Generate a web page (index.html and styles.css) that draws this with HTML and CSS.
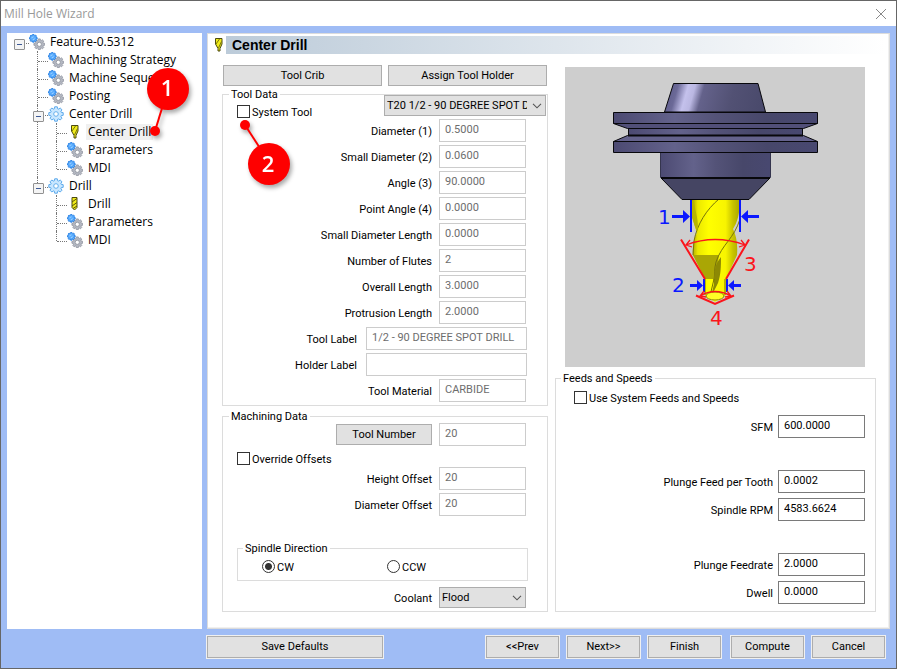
FILE: index.html
```html
<!DOCTYPE html>
<html lang="en">
<head>
<meta charset="utf-8">
<meta name="viewport" content="width=device-width, initial-scale=1">
<title>Mill Hole Wizard</title>
<link rel="stylesheet" href="styles.css">
</head>
<body>
<svg class="sprite" aria-hidden="true">
  <defs>
    <linearGradient id="steel" x1="0" x2="1" y1="0" y2="0">
      <stop offset="0" stop-color="#4c4a72"/><stop offset=".3" stop-color="#63628b"/><stop offset=".5" stop-color="#545378"/><stop offset=".75" stop-color="#47476a"/><stop offset="1" stop-color="#484870"/>
    </linearGradient>
    <linearGradient id="cone" x1="0" x2="1" y1="0" y2=".08">
      <stop offset="0" stop-color="#565482"/><stop offset=".14" stop-color="#6c6a98"/><stop offset=".24" stop-color="#c4c1ec"/><stop offset=".31" stop-color="#bab7e2"/><stop offset=".4" stop-color="#64628b"/><stop offset=".7" stop-color="#525174"/><stop offset="1" stop-color="#4a4a6c"/>
    </linearGradient>
    <linearGradient id="brass" x1="0" x2="1" y1="0" y2="0">
      <stop offset="0" stop-color="#a8a400"/><stop offset=".12" stop-color="#ece800"/><stop offset=".35" stop-color="#ffff00"/><stop offset=".7" stop-color="#f8f400"/><stop offset=".85" stop-color="#c8c400"/><stop offset="1" stop-color="#aaa600"/>
    </linearGradient>
    <path id="cog" d="M5.200-1.700 7.200-1.300 7.200 1.300 5.200 1.700 4.900 2.500 6 4.200 4.200 6 2.500 4.900 1.700 5.200 1.300 7.200-1.300 7.200-1.700 5.200-2.500 4.900-4.200 6-6 4.200-4.900 2.500-5.200 1.700-7.200 1.300-7.200-1.300-5.200-1.700-4.900-2.500-6-4.200-4.200-6-2.500-4.900-1.700-5.200-1.300-7.200 1.300-7.200 1.700-5.200 2.500-4.900 4.200-6 6-4.200 4.900-2.500z" stroke-linejoin="round"/>
    <symbol id="gears" viewBox="0 0 16 16">
      <use href="#cog" transform="translate(10.300 10.300) scale(.75)" fill="#b4b8c2" stroke="#8d929e" stroke-width="1"/>
      <circle cx="10.300" cy="10.300" r="2.100" fill="#fff" stroke="#8b909b" stroke-width=".8"/>
      <use href="#cog" transform="translate(4.300 4.300) scale(.54)" fill="#5aadff" stroke="#1d78e0" stroke-width="1.500"/>
      <path d="M2.500 3.800 4.500 2.800M3.800 5.800 5.800 4.800" stroke="#a5d5ff" stroke-width=".9"/>
    </symbol>
    <symbol id="gear" viewBox="0 0 16 16">
      <use href="#cog" transform="translate(8 8)" fill="#c9e7ff" stroke="#4fa3ea" stroke-width=".9"/>
      <circle cx="8" cy="8" r="2.300" fill="#fff" stroke="#57a8ea" stroke-width=".9"/>
    </symbol>
    <symbol id="spot" viewBox="0 0 16 16">
      <path d="M4.500 1.500h6.500v5.500L9 11.500v2.500H7v-2.500L4.500 7z" fill="#f1ec1a" stroke="#4c4b10" stroke-width="1"/>
      <path d="M8.500 2 5 7M10.500 4.500 7.500 11" stroke="#77750c" stroke-width="1"/>
    </symbol>
    <symbol id="drill" viewBox="0 0 16 16">
      <path d="M5 1.500h5v10l-2.500 2.500L5 11.500z" fill="#f1ec1a" stroke="#4c4b10" stroke-width="1"/>
      <path d="M10 2.500 5 6M10 6.500 5 10M10 10 6 12.500" stroke="#57550c" stroke-width="1"/>
    </symbol>
    <symbol id="chevron" viewBox="0 0 10 6"><path d="M1 .8 5 4.800 9 .8" fill="none" stroke="#555" stroke-width="1.100"/></symbol>
  </defs>
</svg>
<div class="window">
  <header class="titlebar">
    <span>Mill Hole Wizard</span>
    <button class="close" type="button" aria-label="Close"><svg viewBox="0 0 12 12"><path d="M1 1 11 11M11 1 1 11" stroke="#888" stroke-width="1"/></svg></button>
  </header>

  <div class="body">
    <nav class="tree" aria-label="Feature steps">
      <ul class="root">
        <li><div class="node open"><svg><use href="#gears"/></svg><span>Feature-0.5312</span></div>
          <ul>
            <li><div class="node"><svg><use href="#gears"/></svg><span>Machining Strategy</span></div></li>
            <li><div class="node"><svg><use href="#gears"/></svg><span>Machine Sequence</span></div></li>
            <li><div class="node"><svg><use href="#gears"/></svg><span>Posting</span></div></li>
            <li><div class="node open"><svg><use href="#gear"/></svg><span>Center Drill</span></div>
              <ul>
                <li><div class="node selected"><svg><use href="#spot"/></svg><span>Center Drill</span>
                  <svg class="callout callout-one" viewBox="0 0 60 80"><path d="M16 63 28 24" stroke="#fe0000" stroke-width="2"/><circle cx="16" cy="63" r="5" fill="#fe0000"/><circle cx="29" cy="21" r="21" fill="#fe0000"/><text x="28" y="28">1</text></svg></div></li>
                <li><div class="node"><svg><use href="#gears"/></svg><span>Parameters</span></div></li>
                <li><div class="node"><svg><use href="#gears"/></svg><span>MDI</span></div></li>
              </ul>
            </li>
            <li><div class="node open"><svg><use href="#gear"/></svg><span>Drill</span></div>
              <ul>
                <li><div class="node"><svg><use href="#drill"/></svg><span>Drill</span></div></li>
                <li><div class="node"><svg><use href="#gears"/></svg><span>Parameters</span></div></li>
                <li><div class="node"><svg><use href="#gears"/></svg><span>MDI</span></div></li>
              </ul>
            </li>
          </ul>
        </li>
      </ul>
    </nav>

    <main class="page">
      <div class="page-head"><svg><use href="#spot"/></svg><h1>Center Drill</h1></div>
      <div class="columns">
        <div class="column">
          <div class="tool-buttons">
            <button type="button">Tool Crib</button>
            <button type="button">Assign Tool Holder</button>
          </div>

          <fieldset class="tool-data">
            <legend>Tool Data</legend>
            <div class="tool-pick">
              <label class="check"><input type="checkbox">System Tool
                <svg class="callout callout-two" viewBox="0 0 70 80"><path d="M12 8 34 42" stroke="#fe0000" stroke-width="2"/><circle cx="12" cy="8" r="5" fill="#fe0000"/><circle cx="36" cy="47" r="21" fill="#fe0000"/><text x="35" y="55">2</text></svg></label>
              <div class="select"><select aria-label="Tool"><option>T20 1/2 - 90 DEGREE SPOT DRILL</option></select><svg><use href="#chevron"/></svg></div>
            </div>
            <div class="rows">
              <div class="row"><label for="dia">Diameter (1)</label><input id="dia" value="0.5000" disabled></div>
              <div class="row"><label for="sdia">Small Diameter (2)</label><input id="sdia" value="0.0600" disabled></div>
              <div class="row"><label for="ang">Angle (3)</label><input id="ang" value="90.0000" disabled></div>
              <div class="row"><label for="pang">Point Angle (4)</label><input id="pang" value="0.0000" disabled></div>
              <div class="row"><label for="sdl">Small Diameter Length</label><input id="sdl" value="0.0000" disabled></div>
              <div class="row"><label for="flutes">Number of Flutes</label><input id="flutes" value="2" disabled></div>
              <div class="row"><label for="olen">Overall Length</label><input id="olen" value="3.0000" disabled></div>
              <div class="row"><label for="plen">Protrusion Length</label><input id="plen" value="2.0000" disabled></div>
              <div class="row wide"><label for="tlabel">Tool Label</label><input id="tlabel" value="1/2 - 90 DEGREE SPOT DRILL" disabled></div>
              <div class="row wide"><label for="hlabel">Holder Label</label><input id="hlabel" value="" disabled></div>
              <div class="row"><label for="mat">Tool Material</label><input id="mat" value="CARBIDE" disabled></div>
            </div>
          </fieldset>

          <fieldset class="machining">
            <legend>Machining Data</legend>
            <div class="rows">
              <div class="row"><button type="button">Tool Number</button><input value="20" aria-label="Tool Number" disabled></div>
              <label class="check"><input type="checkbox">Override Offsets</label>
              <div class="row"><label for="hoff">Height Offset</label><input id="hoff" value="20" disabled></div>
              <div class="row"><label for="doff">Diameter Offset</label><input id="doff" value="20" disabled></div>
            </div>
            <fieldset class="spindle">
              <legend>Spindle Direction</legend>
              <label class="check"><input type="radio" name="dir" checked>CW</label>
              <label class="check"><input type="radio" name="dir">CCW</label>
            </fieldset>
            <div class="rows">
              <div class="row"><label for="cool">Coolant</label><div class="select"><select id="cool"><option>Flood</option></select><svg><use href="#chevron"/></svg></div></div>
            </div>
          </fieldset>
        </div>

        <div class="column">
          <svg class="drawing" viewBox="0 0 300 300" role="img" aria-label="Tool dimensions">
            <rect width="300" height="300" fill="#cecece"/>
            <path d="M127 132H175C175 147 172 156 168 162C171 168 173 177 172 188L161 212V228L150 235 140 228V212L128 188C127 180 129 172 132 165C128 156 127 148 127 132z" fill="url(#brass)"/>
            <path d="M128 188H154L150 212H140z" fill="#aaa605"/>
            <path d="M154 132C142 142 132 157 129 174L128 188M175 152C169 172 157 177 151 195C149 202 150 208 149 213" fill="none" stroke="#77740a"/>
            <path d="M156 190C150 197 149 204 149 217L146 230 153 216C156 207 156 199 156 190z" fill="#8d8904"/>
            <path d="M127 134V151L132 165C135 156 130 145 129 134z" fill="#b8b400"/>
            <path d="M140 212V228M160 212V228M149 212 145 229" stroke="#777400" fill="none"/>
            <ellipse cx="150" cy="229" rx="9" ry="4" fill="#ffff25" stroke="#8c8706"/>
            <g stroke="#08080c">
              <path d="M108.500 16.500H193L200.500 45H99.500z" fill="url(#cone)"/>
              <path d="M48.500 56.500 62.500 61.500H238.500L252.500 56.500z" fill="#514f78"/>
              <path d="M48.500 45.500h204v11h-204z" fill="url(#steel)"/>
              <path d="M63.500 61.500h174v7h-174z" fill="url(#steel)"/>
              <path d="M62.500 68.500 48.500 74.500H252.500L238.500 68.500z" fill="#64628c"/>
              <path d="M63 68.500H238" stroke-width="2"/>
              <path d="M95.500 85.500h110v25h-110z" fill="url(#steel)" stroke="#35354e"/>
              <path d="M48.500 74.500h204v11h-204z" fill="url(#steel)"/>
              <path d="M96 111 117 132.500H184L205 111z" fill="#454563"/>
              <path d="M96 111H205" stroke-width="2"/>
            </g>
            <g stroke="#0b18ff" stroke-width="2" fill="none">
              <path d="M126 133V165M175 133V165M139 212V225M162 212V225"/>
              <path d="M107 149.500H119M194 149.500H182M125 218.500H133M176 218.500H168" stroke-width="3"/>
            </g>
            <path d="M118 143 125 149.500 118 156zM183 143 176 149.500 183 156zM132 213 138 218.500 132 224zM169 213 163 218.500 169 224z" fill="#0b18ff"/>
            <g stroke="#fb151b" fill="none">
              <path d="M116 172.500 140 212M184 172.500 161 212M131 228.500 150 237 169 228.500" stroke-width="2"/>
              <path d="M121 178Q150 167 180 178M135 229Q150 220 166 229M125 173 121 178 127 180M176 173 180 178 174 180M139 224 135 229 141 230M162 224 166 229 160 230" stroke-width="1.300"/>
            </g>
            <g class="dims">
              <text class="blue" x="93" y="157">1</text><text class="blue" x="107" y="225">2</text>
              <text class="red" x="179" y="204">3</text><text class="red" x="145" y="258">4</text>
            </g>
          </svg>

          <fieldset class="feeds">
            <legend>Feeds and Speeds</legend>
            <label class="check"><input type="checkbox">Use System Feeds and Speeds</label>
            <div class="row"><label for="sfm">SFM</label><input id="sfm" value="600.0000"></div>
            <div class="row apart"><label for="pft">Plunge Feed per Tooth</label><input id="pft" value="0.0002"></div>
            <div class="row"><label for="rpm">Spindle RPM</label><input id="rpm" value="4583.6624"></div>
            <div class="row apart"><label for="pfr">Plunge Feedrate</label><input id="pfr" value="2.0000"></div>
            <div class="row"><label for="dwell">Dwell</label><input id="dwell" value="0.0000"></div>
          </fieldset>
        </div>
      </div>
    </main>
  </div>

  <footer class="actions">
    <button class="save" type="button">Save Defaults</button>
    <div class="group">
      <button type="button">&lt;&lt;Prev</button>
      <button type="button">Next&gt;&gt;</button>
      <button type="button">Finish</button>
    </div>
    <div class="group">
      <button type="button">Compute</button>
      <button type="button">Cancel</button>
    </div>
  </footer>
</div>
</body>
</html>
```
FILE: styles.css
```css
* { box-sizing: border-box; }
body { margin: 0; font: 11px/14px Roboto, "Noto Sans", sans-serif; color: #000; background: #9fbcf5; }
.sprite { position: absolute; width: 0; height: 0; }
.window { min-height: 100vh; display: flex; flex-direction: column; border: 1px solid #666; background: #9fbcf5; }

.titlebar { height: 25px; flex: none; display: flex; align-items: center; justify-content: space-between; padding: 0 9px 0 3px; background: #fff; color: #999; font: 12px/16px "Open Sans", sans-serif; }
.close { width: 12px; height: 12px; padding: 0; border: 0; background: none; }
.close svg { display: block; width: 12px; height: 12px; }

.body { flex: 1; display: grid; grid-template-columns: 195fr 683fr; gap: 5px; padding: 7px 6px 0; }

/* Feature tree */
.tree { background: #fff; padding-left: 7px; font: 12px/16px "Open Sans", sans-serif; }
.tree ul { list-style: none; margin: 0; padding: 0; }
.tree ul ul { margin-left: 19px; }
.tree li { position: relative; }
.tree ul ul > li::before { content: ""; position: absolute; left: 4px; top: 0; bottom: 0; border-left: 1px dotted #777; }
.tree ul ul > li:last-child::before { bottom: auto; height: 10px; }
.node { position: relative; display: flex; align-items: center; height: 18px; padding-left: 15px; white-space: nowrap; }
.node::before { content: ""; position: absolute; left: 5px; top: 10px; width: 10px; border-top: 1px dotted #777; }
.node.open::after { content: ""; position: absolute; left: 0; top: 6px; width: 9px; height: 9px; border: 1px solid #919191; border-radius: 1px; background: linear-gradient(#3d5a96, #3d5a96) center / 5px 1px no-repeat, #f4f4f4; }
.node > svg:first-child { width: 16px; height: 16px; flex: none; margin-right: 3px; }
.node span { padding: 0 2px; }
.node.selected span { background: #f0f0f0; }

.callout { position: absolute; z-index: 3; overflow: visible; filter: drop-shadow(2px 3px 2px #0005); pointer-events: none; }
.callout text { font: 600 22px "Open Sans", sans-serif; fill: #fff; text-anchor: middle; }
.callout-one { width: 60px; height: 80px; left: 87px; top: -55px; }
.callout-two { width: 70px; height: 80px; left: -4px; top: 12px; }

/* Page */
.page { background: #fff; border: 1px solid #dcdcdc; padding: 2px 13px 15px 4px; box-shadow: inset -1px -1px #f0f0f0; }
.page-head { display: flex; align-items: center; height: 18px; margin-right: -9px; }
.page-head svg { width: 16px; height: 16px; margin: 0 -1px 0 -1px; flex: none; }
.page-head h1 { flex: 1; margin: 0; padding-left: 6px; font: bold 14px/18px "Liberation Sans", sans-serif; background: linear-gradient(90deg, #bccbd9, #fff); }
.columns { display: grid; grid-template-columns: 326fr 321fr; gap: 7px; padding: 11px 0 0 10px; }
.column { min-width: 0; display: flex; flex-direction: column; }

button, input, select { font: inherit; color: inherit; }
.page button, .actions button { border: 1px solid #adadad; background: #e1e1e1; padding: 0; }
.tool-buttons { display: grid; grid-template-columns: 1fr 1fr; gap: 6px; padding: 0 1px; }
.tool-buttons button { height: 21px; }

fieldset { margin: 0; min-width: 0; border: 1px solid #dcdcdc; padding: 0 0 3px 14px; }
legend { margin: 0 0 -1px -8px; padding: 2px 2px 0; }
.tool-pick { display: flex; justify-content: space-between; height: 24px; margin-top: -6px; padding-right: 1px; }
.tool-pick .check { align-self: flex-end; }
.tool-pick .select { width: 162px; }
.rows { display: flex; flex-direction: column; gap: 3px; padding-right: 21px; }
.row { display: flex; align-items: center; justify-content: flex-end; gap: 7px; }
.row > label { padding-top: 2px; }
.row.wide { gap: 9px; margin-right: -1px; }
.row > input { width: 87px; height: 23px; padding: 0 5px 3px; border: 1px solid #7a7a7a; background: #fff; border-radius: 0; }
.row.wide > input { width: 161px; }
.row > input:disabled { border-color: #ccc; color: #6d6d6d; }
.row > button { width: 96px; height: 21px; }
.row .select { width: 87px; }

.select { position: relative; height: 21px; }
.select select { appearance: none; width: 100%; height: 21px; padding: 0 18px 0 2px; border: 1px solid #adadad; border-radius: 0; background: #e1e1e1; overflow: hidden; }
.select svg { position: absolute; right: 4px; top: 8px; width: 10px; height: 6px; pointer-events: none; }

.check { position: relative; display: flex; align-items: flex-start; gap: 2px; height: 14px; line-height: 16px; }
.check input { appearance: none; flex: none; width: 13px; height: 13px; margin: 0; border: 1px solid #333; background: #fff; }
.check input[type="radio"] { border-radius: 50%; }
.check input[type="radio"]:checked { background: radial-gradient(circle, #333 0 3px, #fff 4px); }

.machining { margin-top: 2px; }
.machining .rows > .check { margin: 3px 0 -2px; }
.spindle { display: grid; grid-template-columns: 125px 1fr; margin: 24px 19px 6px 0; padding: 5px 0 6px 24px; }
.spindle legend { margin-left: -19px; }

.drawing { display: block; width: 300px; max-width: 100%; margin: 2px 0 3px 10px; }
.dims text { font: 20px "DejaVu Sans", sans-serif; }
.blue { fill: #0b18ff; }
.red { fill: #fb151b; }
.feeds { flex: 1; display: flex; flex-direction: column; gap: 5px; padding: 6px 10px 3px 18px; }
.feeds legend { margin-left: -13px; }
.feeds .check { margin-bottom: 5px; }
.feeds .row { gap: 5px; }
.feeds .apart { margin-top: 27px; }

/* Bottom buttons */
.actions { flex: none; display: flex; gap: 10px; padding: 7px 11px 10px 206px; }
.group { display: flex; gap: 8px; }
.actions button { width: 73px; height: 22px; box-shadow: 0 0 0 1px #f0f0f0; }
.actions .save { width: 176px; margin-right: auto; }
```
